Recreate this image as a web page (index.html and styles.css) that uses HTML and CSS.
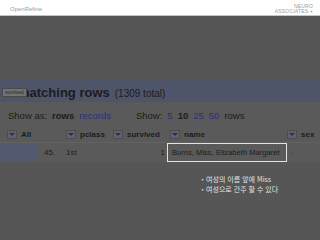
FILE: index.html
```html
<!DOCTYPE html>
<html lang="ko">
<head>
    <meta charset="UTF-8">
    <meta name="viewport" content="width=device-width, initial-scale=1.0">
    <title>OpenRefine</title>
    <link rel="stylesheet" href="styles.css">
</head>
<body>
    <header class="top">
        <span class="logo">OpenRefine</span>
        <span class="brand">NEURO<br>ASSOCIATES <b>+</b></span>
    </header>

    <main class="stage">
        <section class="panel">
            <div class="band">
                <span class="tag">survived</span>
                <span class="count">matching rows</span>
                <span class="total">(1309 total)</span>
            </div>
            <div class="show-row">
                <span>Show as:</span>
                <b>rows</b>
                <a class="link">records</a>
                <span class="show-size">Show:</span>
                <a class="link">5</a>
                <b>10</b>
                <a class="link">25</a>
                <a class="link">50</a>
                <span>rows</span>
            </div>
            <div class="cols">
                <div class="col c-all"><i class="drop"></i>All</div>
                <div class="col c-pclass"><i class="drop"></i>pclass</div>
                <div class="col c-surv"><i class="drop"></i>survived</div>
                <div class="col c-name"><i class="drop"></i>name</div>
                <div class="col c-sex"><i class="drop"></i>sex</div>
            </div>
            <div class="data-row">
                <div class="col c-all"><span class="flag"></span><span class="num">45.</span></div>
                <div class="col c-pclass">1st</div>
                <div class="col c-surv right">1</div>
                <div class="col c-name"><span class="hit">Burns, Miss, Elizabeth Margaret</span></div>
                <div class="col c-sex dash">-</div>
            </div>
        </section>

        <ul class="notes">
            <li>여성의 이름 앞에 Miss</li>
            <li>여성으로 간주 할 수 있다</li>
        </ul>
    </main>
</body>
</html>
```

FILE: styles.css
```css
html, body {
    margin: 0;
    padding: 0;
}
body {
    width: 320px;
    height: 240px;
    overflow: hidden;
    background-color: #565656;
    font-family: "Liberation Sans", Arial, sans-serif;
    color: #1c1c1c;
}
.top {
    height: 15px;
    background-color: #fff;
    border-bottom: 1px solid #c4c4c4;
    display: flex;
    justify-content: space-between;
    align-items: flex-start;
    padding: 0 7px 0 10px;
}
.logo {
    font-size: 6px;
    color: #9a9a9a;
    margin-top: 6px;
}
.brand {
    font-size: 5px;
    line-height: 5px;
    color: #9a9a9a;
    text-align: right;
    margin-top: 4px;
    letter-spacing: 0.2px;
}
.brand b {
    color: #e06a6a;
    font-weight: normal;
}
.stage {
    padding-top: 64px;
}
.panel {
    background-color: #5a5a5a;
}
.band {
    position: relative;
    height: 22px;
    background-color: #4f5569;
    display: flex;
    align-items: baseline;
    gap: 5px;
    padding: 5px 0 0 18px;
    box-sizing: border-box;
}
.count {
    font-size: 13px;
    font-weight: bold;
}
.total {
    font-size: 10px;
}
.tag {
    position: absolute;
    left: 2px;
    top: 8px;
    width: 25px;
    height: 9px;
    background-color: #727272;
    border: 1px solid #4a4a4a;
    font-size: 5px;
    line-height: 7px;
    text-align: center;
    color: #262626;
    box-sizing: border-box;
    z-index: 1;
}
.show-row {
    display: flex;
    align-items: baseline;
    gap: 5px;
    font-size: 9.5px;
    padding: 8px 0 0 8px;
    height: 24px;
    box-sizing: border-box;
}
.show-row .show-size {
    margin-left: 20px;
}
.link {
    color: #2a2f7e;
}
.cols, .data-row {
    display: flex;
    font-size: 8px;
}
.cols {
    height: 16px;
    align-items: center;
    font-weight: bold;
    border-bottom: 1px solid #626262;
    padding-left: 7px;
}
.col {
    display: flex;
    align-items: center;
    box-sizing: border-box;
    white-space: nowrap;
}
.c-all { width: 59px; }
.c-pclass { width: 47px; }
.c-surv { width: 55px; }
.c-name { width: 119px; }
.c-sex { flex: 1; }
.cols .c-name { padding-left: 2px; }
.drop {
    width: 10px;
    height: 9px;
    background-color: #626262;
    border: 1px solid #4d4d4d;
    box-sizing: border-box;
    margin-right: 4px;
    position: relative;
}
.drop::after {
    content: "";
    position: absolute;
    left: 1px;
    top: 2px;
    border-left: 3.5px solid transparent;
    border-right: 3.5px solid transparent;
    border-top: 3.5px solid #1f2a8c;
}
.data-row {
    height: 19px;
    align-items: center;
}
.data-row .c-all {
    width: 66px;
    height: 100%;
}
.flag {
    width: 37px;
    height: 100%;
    background-color: #525a70;
}
.num {
    margin-left: 7px;
}
.right {
    justify-content: flex-end;
    padding-right: 3px;
}
.c-name .hit {
    display: block;
    border: 1px solid #e2e2e2;
    padding: 4px 4px;
    margin-left: -1px;
    width: 123px;
    box-sizing: border-box;
    white-space: nowrap;
    overflow: hidden;
    font-size: 7.6px;
}
.dash {
    padding-left: 4px;
    color: #3a3a3a;
}
.notes {
    list-style: none;
    margin: 12px 0 0 199px;
    padding: 0;
    font-family: "Noto Sans CJK KR", "Liberation Sans", sans-serif;
    font-size: 7px;
    line-height: 10px;
    color: #e2e2e2;
}
.notes li::before {
    content: "・";
}
```
